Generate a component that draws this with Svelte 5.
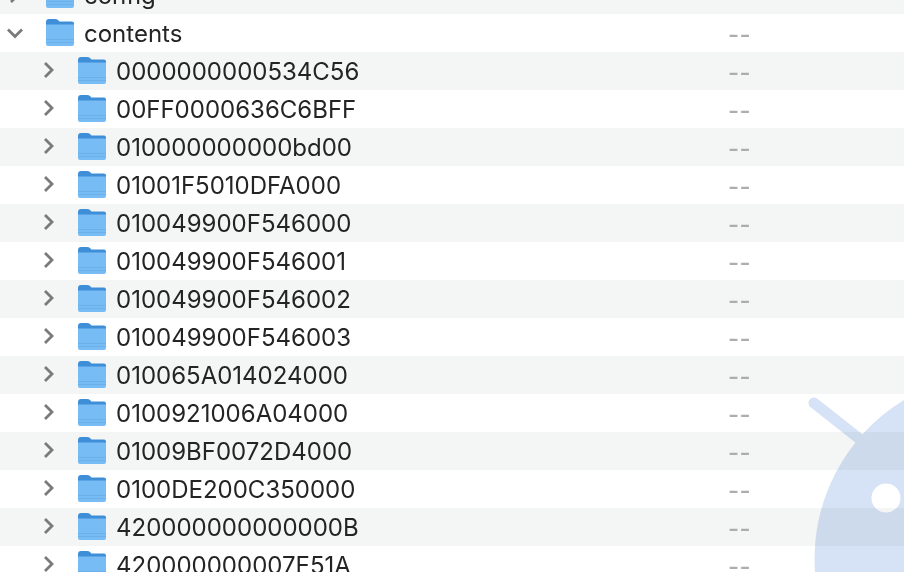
<script>
  const rows = [
    { name: 'config', depth: 0, open: false },
    { name: 'contents', depth: 0, open: true },
    { name: '0000000000534C56', depth: 1 },
    { name: '00FF0000636C6BFF', depth: 1 },
    { name: '010000000000bd00', depth: 1 },
    { name: '01001F5010DFA000', depth: 1 },
    { name: '010049900F546000', depth: 1 },
    { name: '010049900F546001', depth: 1 },
    { name: '010049900F546002', depth: 1 },
    { name: '010049900F546003', depth: 1 },
    { name: '010065A014024000', depth: 1 },
    { name: '0100921006A04000', depth: 1 },
    { name: '01009BF0072D4000', depth: 1 },
    { name: '0100DE200C350000', depth: 1 },
    { name: '420000000000000B', depth: 1 },
    { name: '420000000007E51A', depth: 1 }
  ];
</script>

<div class="window">
  <ul class="list">
    {#each rows as row}
      <li class="row" class:nested={row.depth === 1}>
        <svg class="chevron" viewBox="0 0 16 16" width="16" height="16">
          {#if row.open}
            <path d="M1 4.5 L8 11.5 L15 4.5" />
          {:else}
            <path d="M4 1 L11 8 L4 15" />
          {/if}
        </svg>
        <svg class="folder" viewBox="0 0 28 27" width="28" height="27">
          <path class="back" d="M0 3 Q0 0 3 0 H9 Q11 0 12 1 L13.5 2.5 H26 Q28 2.5 28 4.5 V12 H0 Z" />
          <path class="front" d="M0 5.5 H28 V25 Q28 27 26 27 H2 Q0 27 0 25 Z" />
          <rect class="band" x="0" y="20" width="28" height="1" />
          <rect class="band" x="0" y="23" width="28" height="1" />
        </svg>
        <span class="name">{row.name}</span>
        <span class="date">--</span>
      </li>
    {/each}
  </ul>

  <svg class="watermark" viewBox="0 0 904 572" width="904" height="572">
    <line x1="814" y1="403" x2="866" y2="444" />
    <path d="M904 400 A186 186 0 0 0 815 572 H904 Z" />
    <circle cx="886" cy="498" r="14.5" />
  </svg>
</div>

<style>
  :global(body) {
    background: #fff;
  }

  .window {
    position: relative;
    width: 904px;
    height: 572px;
    overflow: hidden;
    font-family: Inter, "Liberation Sans", sans-serif;
    color: #242424;
  }

  .list {
    list-style: none;
    margin: -24px 0 0;
    padding: 0;
  }

  .row {
    display: flex;
    align-items: center;
    height: 38px;
    padding-left: 7px;
  }

  .row:nth-child(odd) {
    background: #f4f5f5;
  }

  .row.nested {
    padding-left: 41px;
  }

  .chevron {
    flex: none;
    margin-right: 23px;
    margin-top: -1px;
  }

  .chevron path {
    fill: none;
    stroke: #7a7a7a;
    stroke-width: 2.8;
  }

  .row.nested .chevron {
    margin-right: 21px;
    margin-top: -3px;
  }

  .folder {
    flex: none;
    margin-right: 10px;
    margin-top: -2px;
  }

  .back {
    fill: #3f8fd8;
  }

  .front {
    fill: #78bcf5;
  }

  .band {
    fill: #6cb0ea;
  }

  .name {
    padding-top: 2px;
    font-size: 24px;
    line-height: 36px;
    white-space: nowrap;
  }

  .date {
    position: absolute;
    left: 728px;
    padding-top: 2px;
    font-size: 24px;
    font-weight: 500;
    color: #adadad;
    letter-spacing: 0.5px;
  }

  .watermark {
    position: absolute;
    left: 0;
    top: 0;
    mix-blend-mode: multiply;
    pointer-events: none;
  }

  .watermark line {
    stroke: #d6e3f6;
    stroke-width: 11;
    stroke-linecap: round;
  }

  .watermark path {
    fill: #d6e3f6;
  }

  .watermark circle {
    fill: #fff;
  }
</style>
